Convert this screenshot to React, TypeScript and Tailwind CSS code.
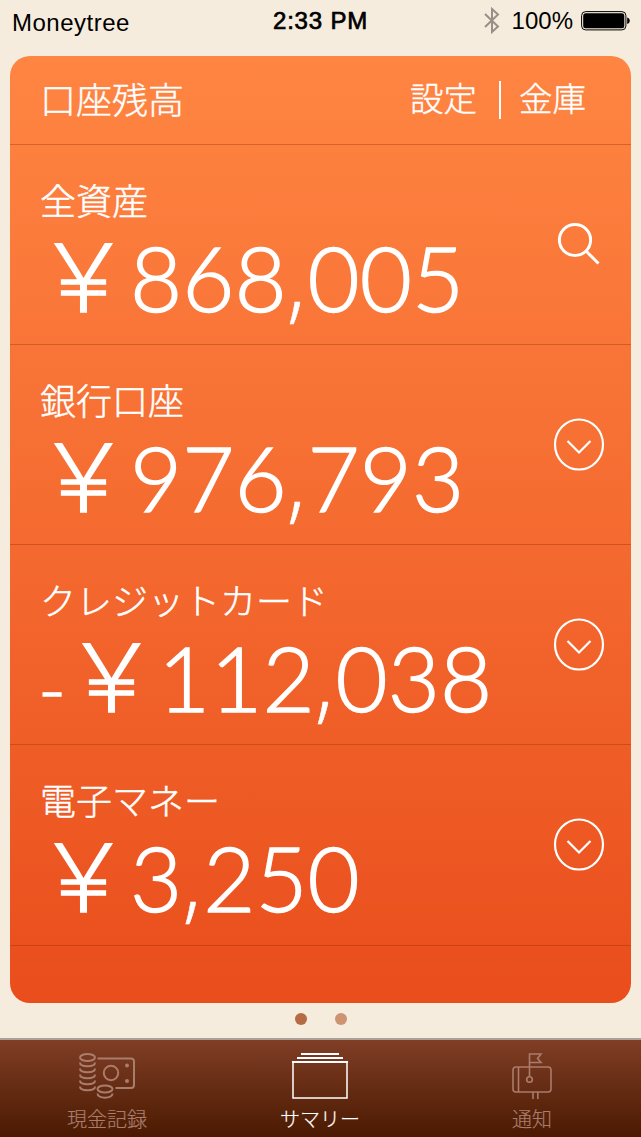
import type { ReactNode } from "react";

type Account = {
  label: string;
  negative?: boolean;
  amount: string;
  action: "search" | "expand";
};

// full-width yen sign
const YEN = "\uFFE5";

const accounts: Account[] = [
  { label: "全資産", amount: "868,005", action: "search" },
  { label: "銀行口座", amount: "976,793", action: "expand" },
  { label: "クレジットカード", negative: true, amount: "112,038", action: "expand" },
  { label: "電子マネー", amount: "3,250", action: "expand" },
];

function BluetoothIcon() {
  return (
    <svg className="h-[27px] w-4" viewBox="0 0 16 27" fill="none" stroke="#989087" strokeWidth="2">
      <path d="M1 7l13 12.5-6 5.5V2l6 5.500L1 20" />
    </svg>
  );
}

function BatteryIcon() {
  return (
    <svg className="h-5 w-[49px]" viewBox="0 0 49 20">
      <rect x="0.600" y="0.600" width="44.300" height="18.300" rx="4" fill="none" stroke="#000" strokeWidth="1" />
      <rect x="2.200" y="2.200" width="41.100" height="15.100" rx="2.500" fill="#000" />
      <path d="M46.200 6.500c3.400.8 3.400 5.700 0 6.500z" fill="#000" />
    </svg>
  );
}

function SearchIcon() {
  return (
    <svg className="h-[44px] w-[44px]" viewBox="0 0 44 44" fill="none" stroke="#fff" strokeWidth="3">
      <circle cx="18" cy="18" r="15.600" />
      <path d="M29 29l12.500 12.500" />
    </svg>
  );
}

function ExpandIcon() {
  return (
    <svg className="h-[52px] w-[52px] overflow-visible" viewBox="0 0 52 52" fill="none" stroke="#fff" strokeWidth="2.200">
      <ellipse cx="26" cy="25.500" rx="24" ry="25" />
      <path d="M14.500 22L26 33.500 37.500 22" />
    </svg>
  );
}

function CashIcon() {
  return (
    <svg className="h-[46px] w-[56px]" viewBox="0 0 56 46" fill="none" stroke="currentColor" strokeWidth="2">
      <ellipse cx="8.500" cy="4.500" rx="7.500" ry="3.500" />
      <path d="M1 9.500c0 5 15 5 15 0M1 15.500c0 5 15 5 15 0M1 21.500c0 5 15 5 15 0M1 27.500c0 5 15 5 15 0M1 33.500c0 5 15 5 15 0" />
      <path d="M18.500 5.500H52q3 0 3 3V32q0 3-3 3H36.500" />
      <circle cx="32" cy="20" r="7.200" />
      <circle cx="48" cy="12.500" r="2" fill="currentColor" stroke="none" />
      <circle cx="48" cy="28" r="2" fill="currentColor" stroke="none" />
      <ellipse cx="26" cy="36" rx="7.500" ry="3.500" />
      <path d="M18.500 40.500c0 5.500 15 5.500 15 0" />
    </svg>
  );
}

function SummaryIcon() {
  return (
    <svg className="h-[46px] w-[56px]" viewBox="0 0 56 46" fill="none" stroke="currentColor">
      <path d="M9 1h38M5 5h46" strokeWidth="2" />
      <path d="M0 9h56" strokeWidth="2" />
      <path d="M1 9v36h54V9" strokeWidth="1.500" />
    </svg>
  );
}

function MailboxIcon() {
  return (
    <svg className="h-[46px] w-10" viewBox="0 0 40 46" fill="none" stroke="currentColor" strokeWidth="1.600">
      <rect x="1" y="14" width="38" height="25" rx="3" />
      <path d="M6.500 14v25M17.500 23.500V1H29l-3.500 4.500L29 9.500H17.500M21 39v7M25.800 39v7" />
      <circle cx="17.500" cy="26.500" r="2.800" />
    </svg>
  );
}

function Amount({ value, negative }: { value: string; negative?: boolean }) {
  const [thousands, rest] = value.split(",");

  return (
    <p className="flex h-[90px] items-baseline text-[90px] leading-[90px] font-light whitespace-nowrap [-webkit-text-stroke:1.4px_white]">
      {negative && (
        <span className="-ml-[2px] w-[30px] translate-y-[5px] font-['Lato'] text-[76px]">-</span>
      )}
      <span className="-ml-[4px] w-[94px] text-[95px] leading-[90px] [-webkit-text-stroke:1.5px_white]">{YEN}</span>
      <span className="font-['Lato']">{thousands}</span>
      <span className="w-[21px] font-['Open_Sans'] [-webkit-text-stroke:0.5px_white]">,</span>
      <span className="font-['Lato']">{rest}</span>
    </p>
  );
}

function AccountRow({ label, negative, amount, action }: Account) {
  return (
    <div className="flex h-[200px] items-start justify-between border-b border-[#8b2a00]/35 pl-[30px] last:h-[201px]">
      <div>
        <p className="mt-[34px] mb-[9px] h-[38px] text-[36px] leading-[40px] font-light [-webkit-text-stroke:0.5px_white]">
          {label}
        </p>
        <Amount value={amount} negative={negative} />
      </div>
      {action === "search" ? (
        <div className="mt-[77px] mr-[30px]">
          <SearchIcon />
        </div>
      ) : (
        <div className="mt-[74px] mr-[26px]">
          <ExpandIcon />
        </div>
      )}
    </div>
  );
}

function Tab({ icon, label, active }: { icon: ReactNode; label: string; active?: boolean }) {
  return (
    <div
      className={`flex flex-col items-center pt-[13px] ${active ? "text-white" : "text-[#a97c6b]"}`}
    >
      {icon}
      <span className="mt-[5px] text-[20px] leading-[30px] font-light [-webkit-text-stroke:0.2px_currentColor]">
        {label}
      </span>
    </div>
  );
}

export default function App() {
  return (
    <div className="flex h-[1137px] w-[641px] flex-col overflow-hidden bg-[#f6ecdd] font-['Noto_Sans_CJK_JP',sans-serif] text-white">
      <header className="grid h-[56px] grid-cols-3 font-['Liberation_Sans',sans-serif] text-[24px] text-black">
        <span className="pt-[5px] pl-[12px] tracking-[0.5px]">Moneytree</span>
        <span className="pt-[3px] text-center tracking-[0.800px] [-webkit-text-stroke:0.7px_black]">2:33 PM</span>
        <div className="flex h-[41px] items-center justify-end gap-2 pr-[11px]">
          <BluetoothIcon />
          <span className="ml-1">100%</span>
          <BatteryIcon />
        </div>
      </header>

      <main className="mx-[10px] h-[947px] overflow-hidden rounded-[20px] bg-linear-to-b from-[#ff8542] to-[#e94d1b]">
        <div className="flex h-[89px] items-center justify-between border-b border-[#8b2a00]/35 pr-[45px] pb-[5px] pl-[30px] font-light [-webkit-text-stroke:0.4px_white]">
          <h1 className="text-[36px] leading-[40px]">口座残高</h1>
          <div className="flex items-center text-[33.500px] leading-[40px]">
            <span className="-mt-[2px]">設定</span>
            <span className="mt-[4px] mr-[18px] ml-[22px] h-[38px] w-[2px] bg-white" />
            <span className="-mt-[2px]">金庫</span>
          </div>
        </div>
        <div>
          {accounts.map((account) => (
            <AccountRow key={account.label} {...account} />
          ))}
        </div>
      </main>

      <div className="flex h-[35px] items-center justify-center gap-7 pb-[3px]">
        <span className="h-3 w-3 rounded-full bg-[#b56c45]" />
        <span className="h-3 w-3 rounded-full bg-[#ce9472]" />
      </div>

      <nav className="grid h-[99px] grid-cols-[214px_212px_212px] border-t-2 border-[#a9a197] bg-linear-to-b from-[#803e25] to-[#4b1a02]">
        <Tab icon={<CashIcon />} label="現金記録" />
        <Tab icon={<SummaryIcon />} label="サマリー" active />
        <Tab icon={<MailboxIcon />} label="通知" />
      </nav>
    </div>
  );
}
